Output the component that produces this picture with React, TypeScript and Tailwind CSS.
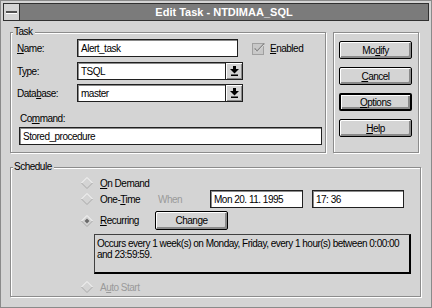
import React from 'react';

const U: React.FC<{ children: React.ReactNode }> = ({ children }) => (
  <span className="underline underline-offset-[1px]">{children}</span>
);

const Group: React.FC<{ label?: string; className?: string; children?: React.ReactNode }> = ({ label, className = '', children }) => (
  <div className={`relative border border-[#8c8c8c] shadow-[1px_1px_0_#fff,inset_1px_1px_0_#fff] ${className}`}>
    {label && (
      <span className="absolute -top-[7px] left-[2px] bg-[#d4d4d4] pl-[1px] pr-[2px] leading-[12px]">{label}</span>
    )}
    {children}
  </div>
);

const Button: React.FC<{ children: React.ReactNode; primary?: boolean; className?: string }> = ({ children, primary, className = '' }) => (
  <div
    className={`h-[18px] w-[73px] flex items-center justify-center bg-[#d4d4d4] rounded-[2px] ${
      primary ? 'border-2 border-black' : 'border border-black'
    } shadow-[inset_1px_1px_0_#fff,inset_-2px_-2px_0_#8a8a8a] ${className}`}
  >
    {children}
  </div>
);

const Field: React.FC<{ value: string; className?: string }> = ({ value, className = '' }) => (
  <div className={`h-[18px] bg-white border border-[#202020] shadow-[inset_1px_1px_0_#8a8a8a] flex items-center pl-[3px] ${className}`}>
    {value}
  </div>
);

const Combo: React.FC<{ value: string }> = ({ value }) => (
  <div className="h-[18px] w-[166px] bg-white border border-[#202020] shadow-[inset_1px_1px_0_#8a8a8a] flex items-center">
    <span className="flex-1 pl-[3px]">{value}</span>
    <div className="h-full w-[17px] border-l border-[#202020] bg-[#d4d4d4] shadow-[inset_1px_1px_0_#fff,inset_-1px_-1px_0_#8a8a8a] flex items-center justify-center">
      <svg width="9" height="10" viewBox="0 0 9 10">
        <rect x="3" y="0" width="3" height="3" fill="#000" />
        <polygon points="0,3 9,3 4.5,7.5" fill="#000" />
        <rect x="1" y="8.5" width="7" height="1.5" fill="#000" />
      </svg>
    </div>
  </div>
);

const Diamond: React.FC<{ checked?: boolean }> = ({ checked }) => (
  <svg width="12" height="12" viewBox="0 0 12 12" className="shrink-0">
    <polygon points="6,0.5 11.5,6 6,11.5 0.5,6" fill="#d4d4d4" />
    <polyline points="0.5,6 6,0.5 11.5,6" fill="none" stroke="#f8f8f8" strokeWidth="1" />
    <polyline points="0.5,6 6,11.5 11.5,6" fill="none" stroke="#a8a8a8" strokeWidth="1" />
    {checked && <polygon points="6,3.5 8.5,6 6,8.5 3.5,6" fill="#6a6a6a" />}
  </svg>
);

export default function App() {
  return (
    <div className="w-[432px] h-[308px] bg-[#d4d4d4] border border-[#8a8a8a] p-[2px] flex flex-col font-['Liberation_Sans',Arial,sans-serif] text-[10px] tracking-[-0.5px] text-black select-none">
      {/* title bar */}
      <div className="h-[18px] flex border border-[#303030] shrink-0">
        <div className="w-[16px] h-full bg-[#d4d4d4] border-r border-[#303030] flex items-center justify-center">
          <div className="w-[11px] h-[3px] bg-[#505050] border-b border-white" />
        </div>
        <div className="flex-1 bg-[#7b7b7b] flex items-center justify-center text-white font-bold text-[11px] tracking-normal">
          Edit Task - NTDIMAA_SQL
        </div>
      </div>

      <div className="flex-1 pl-[7px] pt-[11px]">
        <div className="flex gap-[7px]">
          <Group label="Task" className="w-[316px] h-[121px] pt-[6px] pl-[6px]">
            <div className="flex items-center h-[18px]">
              <span className="w-[60px]"><U>N</U>ame:</span>
              <Field value="Alert_task" className="w-[161px]" />
              <svg width="14" height="13" viewBox="0 0 14 13" className="ml-[14px]">
                <rect x="0.5" y="1.5" width="11" height="11" fill="#c8c8c8" stroke="#a0a0a0" />
                <polyline points="2.5,6.5 5,9.5 12.5,1.5" fill="none" stroke="#8a8a8a" strokeWidth="1.8" />
                <polyline points="2.5,7.5 5,10.5 12.5,2.5" fill="none" stroke="#f4f4f4" strokeWidth="0.8" />
              </svg>
              <span className="ml-[4px]"><U>E</U>nabled</span>
            </div>
            <div className="flex items-center h-[18px] mt-[5px]">
              <span className="w-[60px]">T<U>y</U>pe:</span>
              <Combo value="TSQL" />
            </div>
            <div className="flex items-center h-[18px] mt-[4px]">
              <span className="w-[60px]">Data<U>b</U>ase:</span>
              <Combo value="master" />
            </div>
            <div className="mt-[10px] h-[13px] pl-[3px] leading-[13px]">Co<U>m</U>mand:</div>
            <Field value="Stored_procedure" className="mt-[2px] w-[303px] ml-[2px]" />
          </Group>

          <Group className="w-[86px] h-[121px] pt-[8px] pl-[5px] flex flex-col gap-[8px]">
            <Button>Mo<U>d</U>ify</Button>
            <Button><U>C</U>ancel</Button>
            <Button primary><U>O</U>ptions</Button>
            <Button><U>H</U>elp</Button>
          </Group>
        </div>

        <Group label="Schedule" className="mt-[14px] w-[411px] h-[130px] pt-[8px] pl-[70px]">
          <div className="flex items-center h-[14px]">
            <Diamond />
            <span className="ml-[7px]"><U>O</U>n Demand</span>
          </div>
          <div className="flex items-center h-[18px]">
            <Diamond />
            <span className="ml-[7px] w-[58px]">One-<U>T</U>ime</span>
            <span className="w-[52px] text-[#9a9a9a]">When</span>
            <Field value="Mon 20. 11. 1995" className="w-[93px]" />
            <Field value="17: 36" className="w-[92px] ml-[9px]" />
          </div>
          <div className="flex items-center h-[19px] mt-[3px]">
            <Diamond checked />
            <span className="ml-[7px] w-[55px]"><U>R</U>ecurring</span>
            <Button className="h-[19px]">Change</Button>
          </div>
          <div className="mt-[4px] ml-[13px] w-[317px] h-[40px] border border-[#404040] border-r-2 border-b-2 border-r-black border-b-black px-[2px] pt-[3px] leading-[11px]">
            Occurs every 1 week(s) on Monday, Friday, every 1 hour(s) between 0:00:00 and 23:59:59.
          </div>
          <div className="flex items-center h-[14px] mt-[6px] text-[#9a9a9a]">
            <Diamond />
            <span className="ml-[7px]">A<U>u</U>to Start</span>
          </div>
        </Group>
      </div>
    </div>
  );
}
